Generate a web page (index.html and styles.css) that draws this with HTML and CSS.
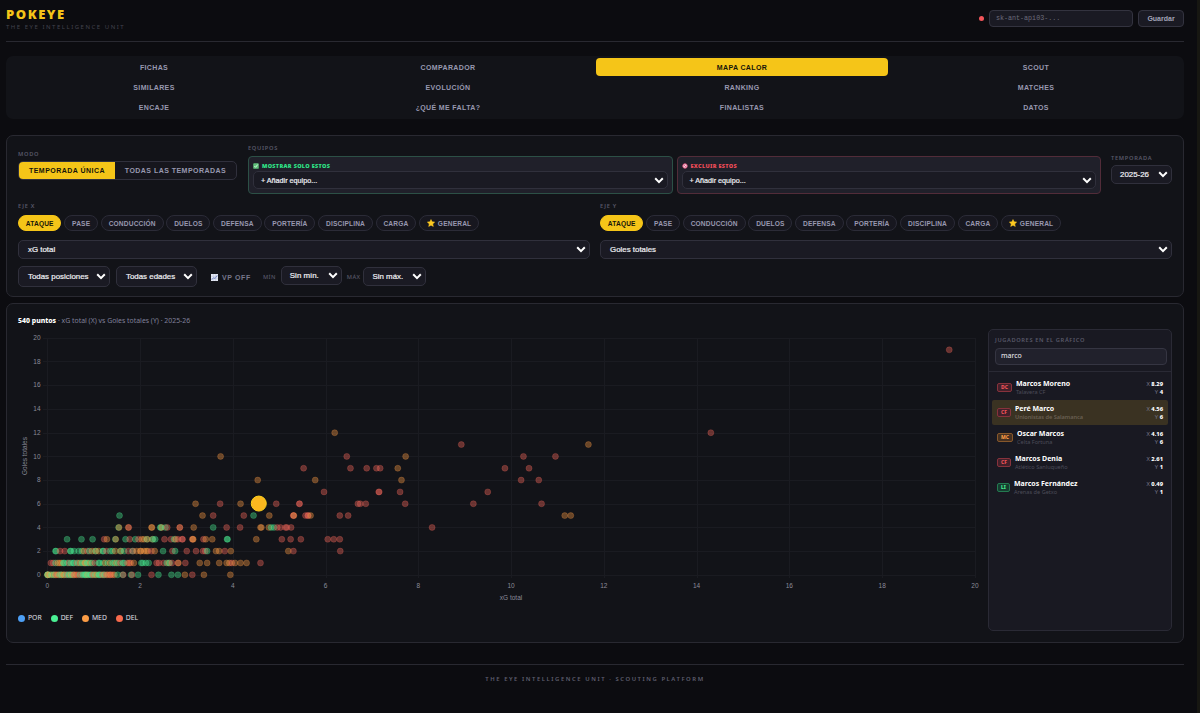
FILE: index.html
```html
<!DOCTYPE html>
<html lang="es">
<head>
    <meta charset="UTF-8">
    <title>Pokeye</title>
    <link rel="stylesheet" href="styles.css">
</head>
<body>
<svg width="0" height="0" class="defs">
    <symbol id="arrow" viewBox="0 0 10 7"><path d="M1.2 1.3 5 5.1 8.8 1.3" fill="none" stroke="#fff" stroke-width="2"/></symbol>
    <symbol id="star" viewBox="0 0 10 10"><path d="M5 .6 6.4 3.5 9.6 3.9 7.2 6.1 7.9 9.3 5 7.7 2.1 9.3 2.8 6.1 .4 3.9 3.6 3.5z" fill="#fcc921" stroke="#fcc921" stroke-width=".6" stroke-linejoin="round"/></symbol>
</svg>

<header class="header">
    <div class="brand">
        <h1>POKEYE</h1>
        <p>THE EYE INTELLIGENCE UNIT</p>
    </div>
    <div class="key">
        <i class="status"></i>
        <div class="key-input">sk-ant-api03-...</div>
        <div class="key-save">Guardar</div>
    </div>
</header>

<nav class="tabs">
    <a>FICHAS</a><a>COMPARADOR</a><a class="on">MAPA CALOR</a><a>SCOUT</a>
    <a>SIMILARES</a><a>EVOLUCIÓN</a><a>RANKING</a><a>MATCHES</a>
    <a>ENCAJE</a><a>¿QUÉ ME FALTA?</a><a>FINALISTAS</a><a>DATOS</a>
</nav>

<section class="panel filters">
    <div class="top">
        <div class="mode">
            <div class="label">MODO</div>
            <div class="toggle"><span class="on">TEMPORADA ÚNICA</span><span>TODAS LAS TEMPORADAS</span></div>
        </div>
        <div class="teams">
            <div class="label">EQUIPOS</div>
            <div class="team-boxes">
                <div class="team-box show">
                    <div class="team-title"><svg viewBox="0 0 7 7"><rect x=".3" y=".3" width="6.4" height="6.4" rx="1" fill="#5fc07a"/><path d="M1.6 3.6 3 5 5.5 1.8" fill="none" stroke="#e8ffee"/></svg>MOSTRAR SOLO ESTOS</div>
                    <div class="select">+ Añadir equipo...<svg><use href="#arrow"/></svg></div>
                </div>
                <div class="team-box hide">
                    <div class="team-title"><svg viewBox="0 0 7 7"><circle cx="3.5" cy="3.5" r="2.6" fill="#f3d5e0" stroke="#e2527f" stroke-width="1.1"/><path d="M1.7 1.7 5.3 5.3" stroke="#e2527f"/></svg>EXCLUIR ESTOS</div>
                    <div class="select">+ Añadir equipo...<svg><use href="#arrow"/></svg></div>
                </div>
            </div>
        </div>
        <div class="season">
            <div class="label">TEMPORADA</div>
            <div class="select">2025-26<svg><use href="#arrow"/></svg></div>
        </div>
    </div>

    <div class="axes">
        <div class="axis">
            <div class="label">EJE X</div>
            <div class="pills">
                <span class="on">ATAQUE</span><span>PASE</span><span>CONDUCCIÓN</span><span>DUELOS</span><span>DEFENSA</span><span>PORTERÍA</span><span>DISCIPLINA</span><span>CARGA</span><span><svg><use href="#star"/></svg>GENERAL</span>
            </div>
            <div class="select">xG total<svg><use href="#arrow"/></svg></div>
        </div>
        <div class="axis">
            <div class="label">EJE Y</div>
            <div class="pills">
                <span class="on">ATAQUE</span><span>PASE</span><span>CONDUCCIÓN</span><span>DUELOS</span><span>DEFENSA</span><span>PORTERÍA</span><span>DISCIPLINA</span><span>CARGA</span><span><svg><use href="#star"/></svg>GENERAL</span>
            </div>
            <div class="select">Goles totales<svg><use href="#arrow"/></svg></div>
        </div>
    </div>

    <div class="bottom">
        <div class="select pos">Todas posiciones<svg><use href="#arrow"/></svg></div>
        <div class="select age">Todas edades<svg><use href="#arrow"/></svg></div>
        <div class="vp"><svg viewBox="0 0 8 8"><rect width="8" height="8" fill="#e4e9f4"/><path d="M0 2.7h8M0 5.3h8M2.7 0v8M5.3 0v8" stroke="#b5bfd6" stroke-width=".5"/><path d="M.8 6.6 3 4.2 4.6 5.2 7.2 1.5" fill="none" stroke="#6d7fc0"/></svg>VP OFF</div>
        <div class="label">MÍN</div>
        <div class="select min">Sin mín.<svg><use href="#arrow"/></svg></div>
        <div class="label">MÁX</div>
        <div class="select max">Sin máx.<svg><use href="#arrow"/></svg></div>
    </div>
</section>

<section class="panel map">
    <div class="map-title"><b>540 puntos</b> · xG total (X) vs Goles totales (Y) · 2025-26</div>
    <div class="map-body">
        <div class="chart">
            <svg id="plot" width="970" height="275" viewBox="18 330 970 275"></svg>
            <div class="legend">
                <span><i class="por"></i>POR</span><span><i class="def"></i>DEF</span><span><i class="med"></i>MED</span><span><i class="del"></i>DEL</span>
            </div>
        </div>
        <aside class="players">
            <div class="search">
                <div class="label">JUGADORES EN EL GRÁFICO</div>
                <div class="search-input">marco</div>
            </div>
            <ul>
                <li><em class="red">DC</em><div class="who"><b>Marcos Moreno</b><small>Talavera CF</small></div><div class="xy">X <b>8.29</b><br>Y <b>4</b></div></li>
                <li class="on"><em class="red">CF</em><div class="who"><b>Peré Marco</b><small>Unionistas de Salamanca</small></div><div class="xy">X <b>4.56</b><br>Y <b>6</b></div></li>
                <li><em class="orange">MC</em><div class="who"><b>Oscar Marcos</b><small>Celta Fortuna</small></div><div class="xy">X <b>4.16</b><br>Y <b>6</b></div></li>
                <li><em class="red">CF</em><div class="who"><b>Marcos Denia</b><small>Atlético Sanluqueño</small></div><div class="xy">X <b>2.61</b><br>Y <b>1</b></div></li>
                <li><em class="green">LI</em><div class="who"><b>Marcos Fernández</b><small>Arenas de Getxo</small></div><div class="xy">X <b>0.49</b><br>Y <b>1</b></div></li>
            </ul>
        </aside>
    </div>
</section>

<footer class="footer">THE EYE INTELLIGENCE UNIT · SCOUTING PLATFORM</footer>
<script src="chart.js"></script>
</body>
</html>
```

FILE: styles.css
```css
* {
    box-sizing: border-box;
    margin: 0;
    padding: 0;
}
body {
    height: 713px;
    padding: 0 13px 0 6px;
    border-right: 3px solid #171712;
    background: #0c0c10;
    color: #f0f0f5;
    font-family: "Noto Sans", sans-serif;
    font-size: 7px;
    overflow: hidden;
}
.defs { position: absolute; }
ul { list-style: none; }

.header {
    display: flex;
    justify-content: space-between;
    height: 42px;
    border-bottom: 1px solid #292931;
}
.brand h1 {
    padding-top: 6px;
    font-size: 13px;
    line-height: 16px;
    font-weight: 900;
    letter-spacing: 1.55px;
    color: #f5c518;
}
.brand p {
    padding-top: 1px;
    font-size: 6px;
    line-height: 9px;
    letter-spacing: 1.52px;
    color: #42424d;
}
.key {
    display: flex;
    align-items: center;
    height: 16px;
    margin-top: 10px;
}
.status {
    width: 5px;
    height: 5px;
    margin-right: 5px;
    border-radius: 50%;
    background: #f2555a;
}
.key-input, .key-save {
    height: 17px;
    border: 1px solid #33333f;
    border-radius: 4px;
    background: #1a1a23;
    line-height: 15px;
}
.key-input {
    width: 144px;
    margin-right: 5px;
    padding-left: 6px;
    font-family: "Liberation Mono", monospace;
    font-size: 6.7px;
    color: #6c6c7a;
}
.key-save {
    width: 46px;
    font-family: "Liberation Sans", sans-serif;
    font-size: 7px;
    font-weight: bold;
    text-align: center;
    color: #a3a3b8;
}

.tabs {
    display: grid;
    grid-template-columns: repeat(4, 1fr);
    grid-auto-rows: 1fr;
    gap: 2px;
    height: 63px;
    margin-top: 14px;
    padding: 2px;
    border-radius: 7px;
    background: #121318;
}
.tabs a {
    display: flex;
    align-items: center;
    justify-content: center;
    border-radius: 4px;
    font: bold 7px "Liberation Sans", sans-serif;
    letter-spacing: .36px;
    color: #9898b0;
}
.tabs .on {
    background: #f5c518;
    color: #17150a;
}

.panel {
    border: 1px solid #292931;
    border-radius: 7px;
    background: #121318;
}
.label {
    font-size: 5.7px;
    line-height: 8px;
    letter-spacing: .7px;
    font-weight: 600;
    color: #585868;
}
.select {
    position: relative;
    height: 19px;
    padding-left: 9px;
    border: 1px solid #30303c;
    border-radius: 5px;
    background: #1a1a23;
    font: 7.9px/17px "Liberation Sans", sans-serif;
    color: #f0f0f5;
    -webkit-text-stroke: .2px #f0f0f5;
    white-space: nowrap;
}
.select svg {
    position: absolute;
    right: 3px;
    top: 5px;
    width: 10px;
    height: 7px;
}

.filters {
    height: 162px;
    margin-top: 16px;
    padding: 8px 11px 0;
}
.top {
    display: flex;
    height: 51px;
}
.mode {
    width: 219px;
    padding-top: 6px;
}
.toggle {
    display: flex;
    height: 19px;
    margin-top: 3px;
    border: 1px solid #30303c;
    border-radius: 5px;
    overflow: hidden;
    background: #16161d;
}
.toggle span {
    flex: 1;
    font: bold 7px/17px "Liberation Sans", sans-serif;
    letter-spacing: .47px;
    text-align: center;
    color: #9898b0;
}
.toggle .on {
    flex: none;
    width: 96px;
    background: #f5c518;
    color: #17150a;
}
.teams {
    flex: 1;
    margin: 0 10px 0 11px;
}
.team-boxes {
    display: grid;
    grid-template-columns: 1fr 1fr;
    gap: 4px;
    margin-top: 4px;
}
.team-box {
    height: 38px;
    padding: 4px 4px 0;
    border: 1px solid;
    border-radius: 4px;
    background: #20202a;
}
.team-title {
    display: flex;
    align-items: center;
    height: 9px;
    font-size: 5.5px;
    font-weight: 900;
    letter-spacing: .33px;
}
.team-title svg {
    width: 6px;
    height: 6px;
    margin-right: 3px;
}
.show { border-color: #2c5046; }
.show .team-title { color: #2fe588; }
.hide { border-color: #522c39; }
.hide .team-title { color: #ee4c58; }
.team-box .select {
    height: 18px;
    margin-top: 1px;
    padding-left: 7px;
    font-size: 7.2px;
    line-height: 17px;
}
.season {
    width: 61px;
    padding-top: 10px;
}
.season .select {
    margin-top: 3px;
    padding-left: 8px;
}

.axes {
    display: grid;
    grid-template-columns: 572px 572px;
    gap: 10px;
    padding-top: 7px;
}
.pills {
    display: flex;
    gap: 2.8px;
    margin-top: 5px;
}
.pills span {
    display: flex;
    align-items: center;
    height: 16px;
    padding: 0 6.8px;
    border: 1px solid #2b2b37;
    border-radius: 8px;
    background: #17171f;
    font: bold 6.6px "Liberation Sans", sans-serif;
    letter-spacing: .17px;
    color: #9898b0;
}
.pills .on {
    border-color: #f5c518;
    background: #f5c518;
    color: #17150a;
}
.pills svg {
    width: 8px;
    height: 8px;
    margin-right: 3px;
}
.axis .select { margin-top: 9px; }

.bottom {
    display: flex;
    align-items: center;
    height: 21px;
    margin-top: 7px;
}
.bottom .pos { width: 92px; height: 21px; line-height: 19px; margin-right: 6px; }
.bottom .age { width: 81px; height: 21px; line-height: 19px; }
.bottom .pos svg, .bottom .age svg { top: 6px; }
.bottom .min { width: 61px; margin: 0 5px 2px 5px; padding-left: 8px; }
.bottom .max { width: 63px; margin-left: 3px; padding-left: 8px; }
.bottom .label { font-weight: 500; letter-spacing: .4px; }
.vp {
    display: flex;
    align-items: center;
    width: 52px;
    margin-left: 14px;
    padding-top: 2px;
    font: bold 7px "Liberation Sans", sans-serif;
    letter-spacing: .6px;
    color: #77778b;
}
.vp svg {
    width: 7px;
    height: 7px;
    margin-right: 4px;
}

.map {
    height: 340px;
    margin-top: 6px;
    padding: 11px 11px 0;
}
.map-title {
    height: 15px;
    font-size: 6.9px;
    line-height: 11px;
    color: #80809a;
}
.map-title b { font-weight: 800; color: #fff; }
.map-body {
    display: flex;
}
.chart { width: 971px; }
.chart svg { display: block; }
.chart text {
    font: 6.5px "Liberation Sans", sans-serif;
    fill: #8b8b98;
}
.grid { stroke: #1a1b21; }
.dot { fill-opacity: .38; stroke-width: 1; stroke-opacity: .24; }
.legend {
    display: flex;
    gap: 9px;
    padding-top: 8px;
    font-size: 6.8px;
    line-height: 10px;
    color: #e0e0ea;
}
.legend span { display: flex; align-items: center; }
.legend i {
    width: 7px;
    height: 7px;
    margin-right: 3px;
    border-radius: 50%;
}
.por { background: #4d9ff5; }
.def { background: #4af094; }
.med { background: #fb9c45; }
.del { background: #f76a4c; }

.players {
    width: 184px;
    height: 302px;
    margin-top: -1px;
    border: 1px solid #2a2a35;
    border-radius: 5px;
    background: #191922;
}
.search {
    height: 42px;
    padding: 6px 6px 0;
    border-bottom: 1px solid #2a2a35;
}
.search .label { font-size: 5.7px; letter-spacing: .62px; }
.search-input {
    width: 172px;
    height: 17px;
    margin-top: 4px;
    padding-left: 5px;
    border: 1px solid #353542;
    border-radius: 4px;
    background: #21212c;
    font-size: 7px;
    line-height: 14px;
}
.players ul { padding: 3px 3px 0; }
.players li {
    display: flex;
    align-items: center;
    height: 25px;
    padding: 0 5px;
    border-radius: 2px;
}
.players li.on { background: #3a3222; }
.players em {
    height: 9px;
    margin-right: 4px;
    padding: 0 3px;
    border: 1px solid;
    border-radius: 2px;
    font-size: 5px;
    line-height: 7px;
    font-weight: 800;
    font-style: normal;
}
.players .red { border-color: #87323c; background: #42202a; color: #f2555a; }
.players .orange { border-color: #86572b; background: #453021; color: #fb9c45; }
.players .green { border-color: #247a50; background: #163c30; color: #4af094; }
.who { flex: 1; }
.who b {
    display: block;
    font-size: 7px;
    line-height: 8px;
    font-weight: 700;
    color: #fff;
}
.who small {
    display: block;
    font-size: 5.6px;
    line-height: 8px;
    color: #4c4c59;
}
.on .who small { color: #6a6053; font-weight: 600; }
.xy {
    font-size: 5.8px;
    line-height: 8px;
    text-align: right;
    color: #77778b;
}
.xy b { font-weight: 800; color: #fff; }

.footer {
    margin-top: 21px;
    padding-top: 10px;
    border-top: 1px solid #292931;
    font-size: 5.9px;
    line-height: 9px;
    font-weight: 600;
    letter-spacing: 1.56px;
    text-align: center;
    color: #5f5f6f;
}
```

FILE: chart.js
```js
var NS = "http://www.w3.org/2000/svg";
var plot = document.getElementById("plot");
var colors = {D: "#4af094", M: "#fb9c45", F: "#f76a5c"};

// goles -> posición + xG de cada jugador
var rows = {
    19: "F19.44",
    12: "M6.19 F14.3",
    11: "F8.92 M11.66",
    10: "M3.73 F6.45 M7.72 F10.26 F10.95",
    9: "F5.52 F6.53 F6.88 F7.09 F7.17 M7.55 F9.86 F10.38",
    8: "M4.53 M5.77 M7.63 F10.21 F10.59",
    7: "F5.96 F7.14 F7.15 F7.6 F9.49",
    6: "M3.19 F3.72 M4.16 F4.93 F5.43 F5.43 F6.69 F6.74 F6.86 F7.71 F9.18 F10.65",
    5: "D1.55 M3.34 F3.57 F4.23 D4.44 M4.78 F5.3 F5.3 M5.31 F5.56 F5.61 F5.62 M5.67 F6.3 F6.48 M11.15 M11.28",
    4: "D1.53 M1.54 M1.74 F1.75 M2.24 M2.25 D2.43 D2.44 M2.46 D2.54 F2.58 M2.85 F2.85 M3.15 D3.57 F3.86 F4.15 M4.59 M4.61 M4.77 D4.82 D4.88 F4.95 F5.02 F5.13 F5.16 F5.25 F8.29",
    3: "D.42 D.73 D.97 F1.22 M1.28 D1.46 M1.47 D1.68 F1.77 D1.89 F1.96 M2.03 M2.08 D2.14 M2.15 M2.26 D2.27 D2.32 F2.52 F2.66 D2.73 M2.76 F2.81 F2.9 F2.91 F3.12 M3.13 M3.14 F3.36 M3.41 M3.55 D3.87 D3.88 M4.5 F5.05 F5.24 F5.46 F6.04 F6.17 F6.3",
    2: "D.17 D.18 F.27 F.37 D.49 D.5 D.57 D.67 D.74 M.78 F.86 D.9 M.96 M1.03 D1.04 M1.1 D1.19 D1.2 F1.27 D1.35 D1.4 M1.46 D1.57 M1.58 D1.65 F1.74 D1.83 F1.84 M1.92 M2 M2.01 M2.08 M2.13 M2.16 F2.24 M2.31 D2.49 F2.69 D2.75 F3 F3.2 F3.35 F3.4 D3.44 M3.63 M3.7 F3.82 M3.95 M5.19 F5.3 F6.31",
    1: "F.07 F.12 D.17 M.22 M.26 M.3 D.34 D.36 D.43 F.46 D.5 D.55 D.57 F.63 D.66 M.7 D.74 D.78 M.8 M.82 D.85 D.88 M.92 D.96 F1.02 D1.1 D1.12 D1.2 M1.24 D1.3 M1.35 D1.4 D1.44 M1.48 D1.52 F1.57 D1.62 D1.65 F1.72 M1.76 F1.79 M1.86 D2.02 D2.05 D2.12 D2.18 F2.35 F2.4 F2.5 D2.57 M2.61 D2.63 F2.68 F2.81 M2.82 F2.97 M3.28 M3.44 M3.7 M3.86 M3.92 F3.97 M4.04 M4.16 M4.29 F4.59",
    0: "D0 D0 M0 D0 M.01 M.05 D.08 M.12 D.14 M.17 F.2 M.23 D.26 M.29 D.3 M.34 M.36 D.4 F.42 D.45 D.48 M.5 D.53 M.56 F.58 M.62 F.66 D.7 F.73 D.76 D.79 D.82 D.83 M.86 D.88 D.92 D.94 F.97 M1 D1.03 M1.06 D1.1 D1.12 D1.15 F1.18 M1.21 D1.23 F1.27 M1.3 F1.34 M1.36 F1.4 M1.44 D1.51 D1.62 F1.63 D1.8 F1.82 D1.95 F2.24 D2.39 D2.67 D2.81 M2.96 F3.12 M3.37 M3.94"
};

function px(v) { return 47.3 + v * 46.38; }
function py(v) { return 574.6 - v * 11.84; }

function add(tag, attrs, text) {
    var el = document.createElementNS(NS, tag);
    for (var k in attrs) el.setAttribute(k, attrs[k]);
    if (text !== undefined) el.textContent = text;
    plot.appendChild(el);
}

for (var i = 0; i <= 20; i += 2) {
    var x = Math.round(px(i)) + .5, y = Math.round(py(i)) + .5;
    add("line", {"class": "grid", x1: x, x2: x, y1: 338, y2: 578});
    add("line", {"class": "grid", x1: 43, x2: 975, y1: y, y2: y});
    add("text", {x: px(i), y: 588, "text-anchor": "middle"}, i);
    add("text", {x: 40.5, y: py(i) + 2.3, "text-anchor": "end"}, i);
}
add("text", {x: 511, y: 600, "text-anchor": "middle"}, "xG total");
add("text", {transform: "translate(26.5 456) rotate(-90)", "text-anchor": "middle"}, "Goles totales");

for (var g in rows) {
    rows[g].split(" ").forEach(function (p) {
        var c = colors[p[0]];
        add("circle", {"class": "dot", cx: px(parseFloat(p.slice(1))) + .3, cy: py(g) + .2, r: 3, fill: c, stroke: c});
    });
}
// jugador seleccionado
add("circle", {cx: px(4.56), cy: py(6), r: 7.5, fill: "#fbb81f", stroke: "#fbd01c", "stroke-width": 1});
```
